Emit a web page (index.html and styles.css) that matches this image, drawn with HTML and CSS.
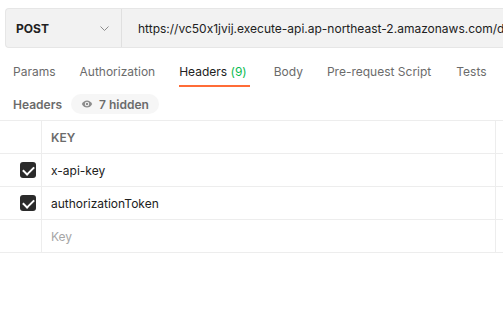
FILE: index.html
```html
<!DOCTYPE html>
<html>
<head>
    <meta http-equiv="Content-Type" content="text/html; charset=utf-8" />
    <title>Headers</title>
    <link rel="stylesheet" href="styles.css">
</head>
<body>
  <div class="url-bar">
    <div class="method">
      <span>POST</span>
      <svg class="chevron" width="9" height="5" viewBox="0 0 9 5"><path d="M0.5 0.5l4 4 4-4" fill="none" stroke="#8c8c8c" stroke-width="1"/></svg>
    </div>
    <div class="url">https://vc50x1jvij.execute-api.ap-northeast-2.amazonaws.com/default/test</div>
  </div>

  <div class="tabs">
    <div class="tab">Params</div>
    <div class="tab">Authorization</div>
    <div class="tab active">Headers <span class="count">(9)</span></div>
    <div class="tab">Body</div>
    <div class="tab">Pre-request Script</div>
    <div class="tab">Tests</div>
  </div>

  <div class="sub-head">
    <span class="sub-title">Headers</span>
    <span class="hidden-pill">
      <svg width="12" height="12" viewBox="0 0 12 12"><path d="M0.8 6C2 3.6 3.9 2.4 6 2.4S10 3.6 11.2 6C10 8.4 8.1 9.6 6 9.6S2 8.4 0.8 6z" fill="#8c8c8c"/><circle cx="6" cy="6" r="2.2" fill="#f6f6f6"/><circle cx="6" cy="6" r="1.2" fill="#8c8c8c"/></svg>
      7 hidden
    </span>
  </div>

  <div class="table">
    <div class="row head">
      <div class="cell check"></div>
      <div class="cell key">KEY</div>
      <div class="cell value"></div>
    </div>
    <div class="row">
      <div class="cell check"><span class="box"></span></div>
      <div class="cell key">x-api-key</div>
      <div class="cell value"></div>
    </div>
    <div class="row">
      <div class="cell check"><span class="box"></span></div>
      <div class="cell key">authorizationToken</div>
      <div class="cell value"></div>
    </div>
    <div class="row">
      <div class="cell check"></div>
      <div class="cell key placeholder">Key</div>
      <div class="cell value"></div>
    </div>
  </div>
</body>
</html>
```

FILE: styles.css
```css
* {
    box-sizing: border-box;
}

body {
    margin: 0;
    background-color: #ffffff;
    font-family: Inter, "Noto Sans", sans-serif;
    font-feature-settings: "calt" 0;
    color: #212121;
    overflow: hidden;
}

.url-bar {
    display: flex;
    margin: 8px 0 0 5px;
    height: 40px;
    border: 1px solid #e6e6e6;
    border-right: none;
    border-radius: 4px 0 0 4px;
    background-color: #f2f2f2;
    white-space: nowrap;
    overflow: hidden;
}

.method {
    flex: none;
    width: 116px;
    padding-left: 10px;
    display: flex;
    align-items: center;
    justify-content: space-between;
    border-right: 1px solid #e0e0e0;
    font-size: 12px;
    font-weight: 700;
}

.chevron {
    margin-right: 12px;
}

.url {
    display: flex;
    align-items: center;
    padding-left: 16px;
    font-size: 12px;
    color: #212121;
}

.tabs {
    display: flex;
    gap: 24px;
    padding-left: 13px;
    margin-top: 13px;
    white-space: nowrap;
}

.tab {
    font-size: 12px;
    color: #6b6b6b;
    padding: 3px 0 6px;
    border-bottom: 2px solid transparent;
}

.tab.active {
    color: #212121;
    padding-right: 3px;
    border-bottom-color: #ff6c37;
}

.tab:last-child {
    margin-left: 1px;
}

.count {
    color: #0cbb52;
}

.sub-head {
    display: flex;
    align-items: center;
    gap: 9px;
    padding-left: 13px;
    margin-top: 7px;
    height: 20px;
}

.sub-title {
    font-size: 12px;
    font-weight: 600;
    color: #6b6b6b;
}

.hidden-pill {
    display: flex;
    align-items: center;
    gap: 6px;
    height: 20px;
    padding: 0 10px;
    border-radius: 10px;
    background-color: #f6f6f6;
    font-size: 12px;
    font-weight: 600;
    color: #6b6b6b;
}

.table {
    margin-top: 6px;
    border-top: 1px solid #ededed;
}

.row {
    display: flex;
    height: 33px;
    border-bottom: 1px solid #ededed;
}

.cell {
    display: flex;
    align-items: center;
    font-size: 12px;
}

.check {
    flex: none;
    width: 42px;
    justify-content: flex-end;
    padding-right: 5px;
    border-right: 1px solid #ededed;
}

.key {
    flex: none;
    width: 454px;
    padding-left: 9px;
    border-right: 1px solid #ededed;
}

.value {
    flex: 1;
}

.head .key {
    font-weight: 600;
    color: #6b6b6b;
}

.placeholder {
    color: #a6a6a6;
}

.box {
    width: 16px;
    height: 16px;
    border-radius: 3px;
    background-color: #2b2b2b;
    position: relative;
}

.box::after {
    content: "";
    position: absolute;
    left: 5px;
    top: 2px;
    width: 5px;
    height: 9px;
    border: solid #ffffff;
    border-width: 0 2px 2px 0;
    transform: rotate(45deg);
}
```
